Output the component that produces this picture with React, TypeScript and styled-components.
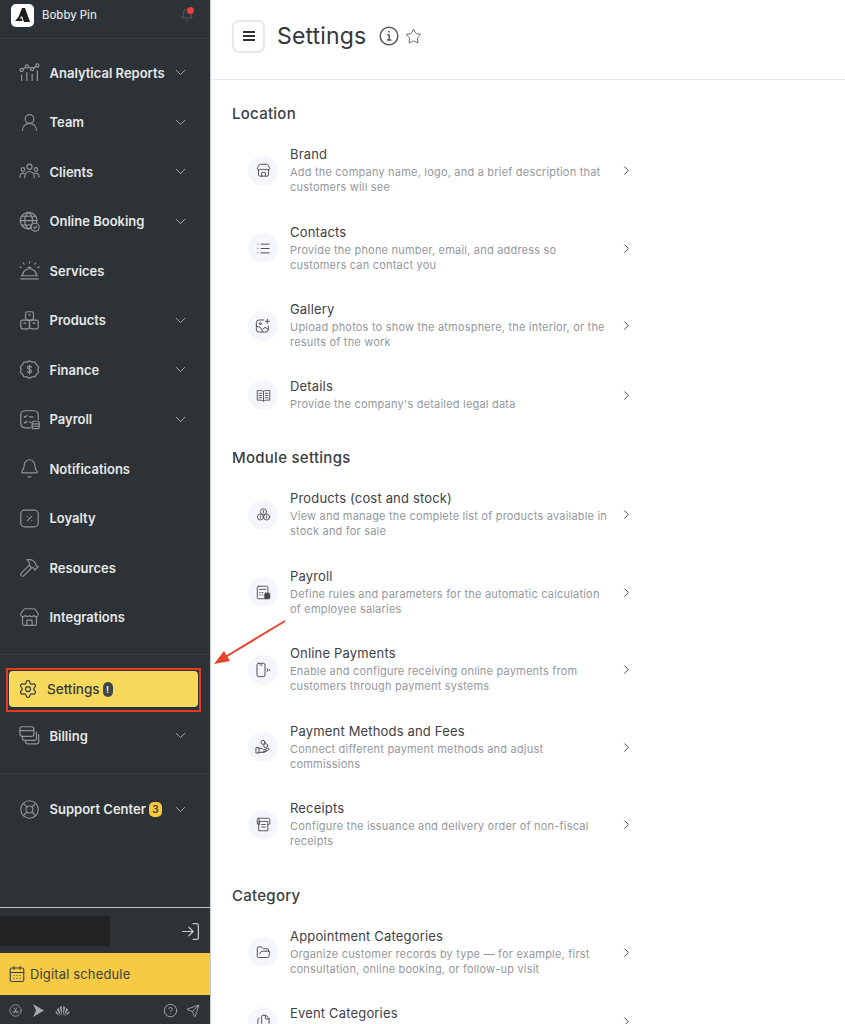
import type { ReactNode } from 'react'
import styled, { createGlobalStyle } from 'styled-components'
import {
  Bell,
  CalendarDays,
  ChevronDown,
  ChevronRight,
  CircleHelp,
  FolderOpen,
  Hammer,
  LifeBuoy,
  List,
  LogIn,
  Send,
  Settings as SettingsIcon,
  Star,
  Store,
  UserRound,
  Files,
} from 'lucide-react'

const GlobalStyle = createGlobalStyle`
  html, body {
    margin: 0;
    padding: 0;
    background: #fff;
    font-family: Inter, "Liberation Sans", sans-serif;
    overflow: hidden;
  }
  * { box-sizing: border-box; }
`

const Page = styled.div`
  position: relative;
  display: flex;
  width: 845px;
  height: 1024px;
  overflow: hidden;
`

const Sidebar = styled.aside`
  flex: 0 0 211px;
  height: 1024px;
  display: flex;
  flex-direction: column;
  background: #2d3236;
  border-right: 1px solid #c9cbcd;
`

const Account = styled.div`
  height: 39px;
  flex: none;
  display: flex;
  align-items: center;
  padding: 0 16px 8px 11px;
  border-bottom: 1px solid #363b3f;
  color: #dfe1e2;
  font-size: 11.4px;
  font-weight: 500;
`

const Logo = styled.div`
  width: 23px;
  height: 23px;
  border-radius: 5px;
  background: #fff;
  display: flex;
  align-items: center;
  justify-content: center;
  margin-right: 8px;
`

const BellWrap = styled.div`
  position: relative;
  margin-left: auto;
  display: flex;
  color: #63686c;

  &::after {
    content: '';
    position: absolute;
    top: -1px;
    right: 0;
    width: 7px;
    height: 7px;
    border-radius: 50%;
    background: #ee3d3d;
  }
`

const Nav = styled.nav`
  padding-top: 9px;
  border-bottom: 1px solid #363b3f;
  padding-bottom: 12px;
`

const NavRow = styled.div`
  height: 49.5px;
  display: flex;
  align-items: center;
  padding-left: 19px;
  padding-right: 21px;
  color: #e6e8e9;
  font-size: 13px;
  font-weight: 600;

  > svg:first-child {
    flex: none;
    margin-right: 9.5px;
    color: #90959a;
  }
`

const NavChevron = styled(ChevronDown)`
  margin-left: auto;
  color: #a4a8ab;
  flex: none;
`

const Highlight = styled.div`
  margin: 13px 9px 0 6px;
  height: 44px;
  padding: 1px;
  border: 2px solid #e53b26;
  background: #2d3236;
`

const HighlightInner = styled.div`
  height: 36px;
  background: #f9d95c;
  border-radius: 4px;
  display: flex;
  align-items: center;
  padding-left: 9px;
  color: #34393d;
  font-size: 13.5px;
  font-weight: 500;

  > svg {
    margin-right: 9px;
  }
`

const SmallBadge = styled.span`
  display: inline-flex;
  align-items: center;
  justify-content: center;
  width: 10px;
  height: 15px;
  margin-left: 3px;
  border-radius: 5px;
  background: #3f454b;
  color: #f0f0f0;
  font-size: 9px;
  font-weight: 700;
`

const CountBadge = styled.span`
  display: inline-flex;
  align-items: center;
  justify-content: center;
  width: 13px;
  height: 15px;
  margin-left: 3px;
  border-radius: 5px;
  background: #f8c93e;
  color: #34393d;
  font-size: 10px;
  font-weight: 600;
`

const Section = styled.div`
  margin-top: -1px;
  border-bottom: 1px solid #363b3f;
  padding-bottom: 12px;
`

const Support = styled.div`
  padding-top: 11px;
`

const Footer = styled.div`
  margin-top: auto;
  flex: none;
`

const UserBar = styled.div`
  height: 46px;
  border-top: 1px solid #c4c6c8;
  display: flex;
  align-items: center;
  justify-content: space-between;
  padding-right: 9px;
  padding-top: 1px;
  color: #c9cbcd;
`

const Redacted = styled.div`
  width: 110px;
  height: 30px;
  background: #212325;
`

const ScheduleBar = styled.div`
  height: 42px;
  display: flex;
  align-items: center;
  gap: 4px;
  padding-left: 8px;
  background: #f6ca42;
  color: #3d4145;
  font-size: 13px;
  letter-spacing: 0.15px;
`

const StoreBar = styled.div`
  height: 29px;
  display: flex;
  align-items: center;
  gap: 11px;
  padding: 2px 10px 0 9px;
  color: #a5a9ac;
`

const StorePush = styled.div`
  margin-left: auto;
  display: flex;
  align-items: center;
  gap: 8px;
`

const Main = styled.main`
  flex: 1;
  min-width: 0;
`

const TopBar = styled.header`
  height: 80px;
  display: flex;
  align-items: center;
  padding: 0 0 7px 21px;
  border-bottom: 1px solid #e9eaec;
`

const MenuButton = styled.button`
  width: 33px;
  height: 33px;
  display: flex;
  align-items: center;
  justify-content: center;
  padding: 0;
  border: 2px solid #e5e7ee;
  border-radius: 7px;
  background: #fff;
  color: #2f3337;
  margin-right: 12px;
`

const MenuBars = styled.span`
  display: block;
  width: 12px;
  height: 10px;
  border-top: 2px solid currentColor;
  border-bottom: 2px solid currentColor;
  position: relative;

  &::after {
    content: '';
    position: absolute;
    left: 0;
    right: 0;
    top: 2px;
    border-top: 2px solid currentColor;
  }
`

const Title = styled.h1`
  margin: 0 13px 0 0;
  color: #33373b;
  font-size: 23px;
  font-weight: 400;
  letter-spacing: 0.15px;
`

const TopIcons = styled.div`
  display: flex;
  align-items: center;
  gap: 6px;
  color: #54585c;
`

const Content = styled.div`
  padding: 25px 0 0 21px;
`

const Heading = styled.h2<{ $gap?: number }>`
  margin: ${(props) => props.$gap ?? 0}px 0 0;
  color: #3a3e42;
  font-size: 15px;
  font-weight: 500;
  line-height: 18px;
  letter-spacing: 0.27px;
`

const RowList = styled.div`
  margin-top: 9px;
  padding-left: 16px;
`

const Row = styled.div<{ $height?: number }>`
  display: flex;
  align-items: center;
  height: ${(props) => props.$height ?? 77.5}px;
  width: 389px;
`

const IconDisc = styled.div`
  flex: none;
  width: 30px;
  height: 30px;
  margin-right: 12px;
  border-radius: 50%;
  background: #f5f6fb;
  display: flex;
  align-items: center;
  justify-content: center;
  color: #43474b;
`

const RowText = styled.div`
  width: 319px;
  margin-top: 0;
`

const RowTitle = styled.div`
  color: #3e4246;
  font-size: 13px;
  line-height: 17px;
  letter-spacing: 0.17px;
  margin-bottom: 2px;
`

const RowDesc = styled.div`
  min-height: 15px;
  color: #94989e;
  font-size: 11px;
  line-height: 15px;
  letter-spacing: 0.2px;
`

const RowChevron = styled(ChevronRight)`
  flex: none;
  margin-left: 10px;
  color: #4a4e52;
`

const Arrow = styled.svg`
  position: absolute;
  left: 210px;
  top: 615px;
`

const iconProps = { size: 21, strokeWidth: 1.3 }
const smallIcon = { size: 15, strokeWidth: 1.5 }

const Glyph = ({ children, size = 21 }: { children: ReactNode; size?: number }) => (
  <svg
    width={size}
    height={size}
    viewBox="0 0 24 24"
    fill="none"
    stroke="currentColor"
    strokeWidth={1.4}
    strokeLinecap="round"
    strokeLinejoin="round"
  >
    {children}
  </svg>
)

const AnalyticsIcon = () => (
  <Glyph>
    <circle cx="3" cy="9" r="1.8" />
    <circle cx="9" cy="5" r="1.8" />
    <circle cx="15" cy="8" r="1.8" />
    <circle cx="21" cy="4" r="1.8" />
    <path d="M4.5 8 7.5 6M10.6 5.8l2.8 1.4M16.5 7l3-2M3 15v6M9 12v9M15 14v7M21 10v11" />
  </Glyph>
)

const ClientsIcon = () => (
  <svg
    width="21"
    height="19"
    viewBox="0 0 26 24"
    fill="none"
    stroke="currentColor"
    strokeWidth="1.5"
    strokeLinecap="round"
  >
    <circle cx="13" cy="6" r="3.2" />
    <circle cx="4.8" cy="9.5" r="2.3" />
    <circle cx="21.2" cy="9.5" r="2.3" />
    <path d="M7 20v-2a6 6 0 0 1 12 0v2M1 19v-1a4 4 0 0 1 5-3.7M25 19v-1a4 4 0 0 0-5-3.7" />
  </svg>
)

const GlobeBadgeIcon = () => (
  <Glyph>
    <circle cx="11" cy="11" r="9.5" />
    <path d="M1.5 11h19M11 1.500c-6 5-6 14 0 19M11 1.500c6 5 6 14 0 19M3 6h16M3 16h16" />
    <circle cx="18.500" cy="18.500" r="4.500" fill="#2d3236" />
    <path d="M16.800 18.500l1.200 1.200 2-2.200" />
  </Glyph>
)

const ServicesIcon = () => (
  <Glyph>
    <path d="M4 18a8 8 0 0 1 16 0M2 21.500h20M2.500 18h19M12 10V8.500M10.500 8.500h3" />
    <path d="M12 2v1.500M5 3.500l.8 1.300M19 3.500l-.8 1.300M1 8l1.400.5M23 8l-1.400.5" />
  </Glyph>
)

const BlocksIcon = () => (
  <Glyph>
    <rect x="7.500" y="2" width="9" height="9.500" rx="2" />
    <rect x="2" y="11.500" width="10" height="10" rx="2" />
    <rect x="12" y="11.500" width="10" height="10" rx="2" />
    <path d="M11 5.500h2M5.500 15h2.500M16 15h2.500" />
  </Glyph>
)

const FinanceIcon = () => (
  <Glyph>
    <path d="M12 2l3 1.600 3.400-.1 1.600 3 2.500 2.500-1 3 1 3-2.500 2.300-1.600 3-3.400.1L12 22l-3-1.600-3.400-.1-1.600-3L1.500 15l1-3-1-3L4 6.500l1.600-3 3.400.1z" />
    <path d="M14.300 9.500c-.4-.9-1.200-1.300-2.300-1.300-1.300 0-2.300.6-2.300 1.800 0 2.500 4.600 1.400 4.600 3.900 0 1.200-1 1.800-2.300 1.800-1.100 0-2-.4-2.400-1.300M12 7v10" />
  </Glyph>
)

const PayrollIcon = () => (
  <Glyph>
    <path d="M13 21.500H7a5 5 0 0 1-5-5V7a5 5 0 0 1 5-5h10a5 5 0 0 1 5 5v5" />
    <path d="M6 8.500l1 1 2-2M6 15l1 1 2-2M12 9h4M12 15h1" />
    <rect x="15" y="14" width="8" height="8.500" rx="1.500" />
    <path d="M15 17h8M15 19.700h8" />
  </Glyph>
)

const LoyaltyIcon = () => (
  <Glyph>
    <rect x="2" y="2.500" width="20" height="19" rx="4.500" />
    <path d="M9.500 14.500l5-5M9.500 9.800h.1M14.500 14.300h.1" />
  </Glyph>
)

const BillingIcon = () => (
  <Glyph>
    <rect x="1" y="2" width="16" height="11" rx="2.500" />
    <path d="M1 6.500h16" />
    <path d="M4 13v2.500a2 2 0 0 0 2 2h12a2 2 0 0 0 2-2V8" />
    <path d="M7.500 17.500v2a2 2 0 0 0 2 2h11a2 2 0 0 0 2-2V11" />
  </Glyph>
)

const GalleryIcon = () => (
  <Glyph size={16}>
    <path d="M13 3H6a4 4 0 0 0-4 4v10a4 4 0 0 0 4 4h10a4 4 0 0 0 4-4v-5" />
    <path d="M2.500 12.500 8 14l4 7M12 16.500l3-2.500 5 3" />
    <circle cx="8" cy="8.500" r="1.500" />
    <path d="M18.500 2v6M15.500 5h6" />
  </Glyph>
)

const BookIcon = () => (
  <Glyph size={15}>
    <path d="M12 5.500C10 4 6 3.500 2 4v15.500c4-.5 8 0 10 1.500 2-1.500 6-2 10-1.500V4c-4-.5-8 0-10 1.500zM12 5.500V21" />
    <path d="M5 8.500h4M5 12h4M5 15.500h4M15 8.500h4M15 12h4M15 15.500h4" />
  </Glyph>
)

const CubesIcon = () => (
  <Glyph size={15}>
    <circle cx="12" cy="7.500" r="4.800" />
    <circle cx="7" cy="16" r="4.800" />
    <circle cx="17" cy="16" r="4.800" />
    <path d="M12 5.500v4M7 14v4M17 14v4" />
  </Glyph>
)

const CalcIcon = () => (
  <Glyph size={15}>
    <rect x="2" y="2" width="17" height="20" rx="2.500" />
    <path d="M5.500 7h10M6 12h1M10 12h1M6 16h1M10 16h1" />
    <rect x="14" y="13" width="8" height="9" rx="1.500" fill="#43474b" />
  </Glyph>
)

const PhoneWaveIcon = () => (
  <Glyph size={16}>
    <rect x="3" y="2" width="12" height="20" rx="2.500" />
    <path d="M7.500 4.500h3M18.500 10v4M21.500 11v2" />
  </Glyph>
)

const HandCoinsIcon = () => (
  <Glyph size={16}>
    <circle cx="12" cy="5" r="3" />
    <circle cx="16" cy="10" r="3" />
    <path d="M2 13h4v8H2zM6 14h4l3 2h2a1.500 1.500 0 0 1 0 3h-3M6 20h8l7-4a1.500 1.500 0 0 0-2-2l-4 2" />
  </Glyph>
)

const ReceiptPrinterIcon = () => (
  <Glyph size={15}>
    <path d="M4 2h16a2 2 0 0 1 2 2v6a2 2 0 0 1-2 2h-1M5 12H4a2 2 0 0 1-2-2V4a2 2 0 0 1 2-2z" />
    <path d="M5 7h14v15H5zM9 12h6M9 16h6" />
  </Glyph>
)

const InfoIcon = () => (
  <svg width="20" height="20" viewBox="0 0 20 20" fill="none" stroke="currentColor" strokeWidth="1.5">
    <circle cx="10" cy="10" r="8.800" />
    <path d="M8.300 9h1.900v5M8 14h4.400" strokeWidth="1.400" />
    <path d="M9.200 5.700h1.500" strokeWidth="1.800" />
  </svg>
)

const AppStoreIcon = () => (
  <Glyph size={13}>
    <circle cx="12" cy="12" r="10.500" />
    <path d="M9 17l5.500-10M15 17L9.500 7M6 14.500h12" />
  </Glyph>
)

const PlayIcon = () => (
  <svg width="11" height="13" viewBox="0 0 11 13">
    <path d="M0 0l11 6.500L0 13l3-6.500z" fill="currentColor" />
  </svg>
)

const HuaweiIcon = () => (
  <svg width="15" height="12" viewBox="0 0 15 12" fill="currentColor">
    <path d="M7 11 4.800 2.500c.6-1 1.500-1.500 1.900-1.500zM8 11l2.200-8.500C9.600 1.500 8.700 1 8.300 1zM6 11 2 5c.3-1 1-1.800 1.700-2.200zM9 11l4-6c-.3-1-1-1.800-1.700-2.200zM5 11 .5 8c0-.7.2-1.400.6-1.900zM10 11l4.500-3c0-.7-.2-1.400-.6-1.900z" />
  </svg>
)

const LogoMark = () => (
  <svg width="15" height="14" viewBox="0 0 15 14">
    <path d="M7 0h3l5 14H9L7 8l-2.500 2.500H7L7.500 13H0l3.500-4z" fill="#1c1e20" />
  </svg>
)

type NavEntry = { label: string; icon: ReactNode; open?: boolean }

const navEntries: NavEntry[] = [
  { label: 'Analytical Reports', icon: <AnalyticsIcon />, open: true },
  { label: 'Team', icon: <UserRound {...iconProps} />, open: true },
  { label: 'Clients', icon: <ClientsIcon />, open: true },
  { label: 'Online Booking', icon: <GlobeBadgeIcon />, open: true },
  { label: 'Services', icon: <ServicesIcon /> },
  { label: 'Products', icon: <BlocksIcon />, open: true },
  { label: 'Finance', icon: <FinanceIcon />, open: true },
  { label: 'Payroll', icon: <PayrollIcon />, open: true },
  { label: 'Notifications', icon: <Bell {...iconProps} /> },
  { label: 'Loyalty', icon: <LoyaltyIcon /> },
  { label: 'Resources', icon: <Hammer {...iconProps} /> },
  { label: 'Integrations', icon: <Store {...iconProps} /> },
]

type SettingRow = { title: string; desc?: string; icon: ReactNode; height?: number }

const location: SettingRow[] = [
  {
    title: 'Brand',
    desc: 'Add the company name, logo, and a brief description that customers will see',
    icon: <Store {...smallIcon} />,
  },
  {
    title: 'Contacts',
    desc: 'Provide the phone number, email, and address so customers can contact you',
    icon: <List {...smallIcon} />,
  },
  {
    title: 'Gallery',
    desc: 'Upload photos to show the atmosphere, the interior, or the results of the work',
    icon: <GalleryIcon />,
  },
  {
    title: 'Details',
    desc: "Provide the company's detailed legal data",
    icon: <BookIcon />,
    height: 61.5,
  },
]

const modules: SettingRow[] = [
  {
    title: 'Products (cost and stock)',
    desc: 'View and manage the complete list of products available in stock and for sale',
    icon: <CubesIcon />,
  },
  {
    title: 'Payroll',
    desc: 'Define rules and parameters for the automatic calculation of employee salaries',
    icon: <CalcIcon />,
  },
  {
    title: 'Online Payments',
    desc: 'Enable and configure receiving online payments from customers through payment systems',
    icon: <PhoneWaveIcon />,
  },
  {
    title: 'Payment Methods and Fees',
    desc: 'Connect different payment methods and adjust commissions',
    icon: <HandCoinsIcon />,
  },
  {
    title: 'Receipts',
    desc: 'Configure the issuance and delivery order of non-fiscal receipts',
    icon: <ReceiptPrinterIcon />,
  },
]

// the last row's description falls below the fold, so only its title is shown
const categories: SettingRow[] = [
  {
    title: 'Appointment Categories',
    desc: 'Organize customer records by type — for example, first consultation, online booking, or follow-up visit',
    icon: <FolderOpen {...smallIcon} />,
  },
  {
    title: 'Event Categories',
    icon: <Files {...smallIcon} />,
    height: 61.5,
  },
]

const Rows = ({ rows }: { rows: SettingRow[] }) => (
  <RowList>
    {rows.map((row) => (
      <Row key={row.title} $height={row.height}>
        <IconDisc>{row.icon}</IconDisc>
        <RowText>
          <RowTitle>{row.title}</RowTitle>
          <RowDesc>{row.desc}</RowDesc>
        </RowText>
        <RowChevron size={15} strokeWidth={1.6} />
      </Row>
    ))}
  </RowList>
)

export default function App() {
  return (
    <Page>
      <GlobalStyle />
      <Sidebar>
        <Account>
          <Logo>
            <LogoMark />
          </Logo>
          Bobby Pin
          <BellWrap>
            <Bell size={14} strokeWidth={1.4} />
          </BellWrap>
        </Account>
        <Nav>
          {navEntries.map((entry) => (
            <NavRow key={entry.label}>
              {entry.icon}
              {entry.label}
              {entry.open && <NavChevron size={17} strokeWidth={1.4} />}
            </NavRow>
          ))}
        </Nav>
        <Highlight>
          <HighlightInner>
            <SettingsIcon size={20} strokeWidth={1.5} />
            Settings
            <SmallBadge>!</SmallBadge>
          </HighlightInner>
        </Highlight>
        <Section>
          <NavRow>
            <BillingIcon />
            Billing
            <NavChevron size={17} strokeWidth={1.4} />
          </NavRow>
        </Section>
        <Support>
          <NavRow>
            <LifeBuoy {...iconProps} />
            Support Center
            <CountBadge>3</CountBadge>
            <NavChevron size={17} strokeWidth={1.4} />
          </NavRow>
        </Support>
        <Footer>
          <UserBar>
            <Redacted />
            <LogIn size={21} strokeWidth={1.4} />
          </UserBar>
          <ScheduleBar>
            <CalendarDays size={18} strokeWidth={1.5} />
            Digital schedule
          </ScheduleBar>
          <StoreBar>
            <AppStoreIcon />
            <PlayIcon />
            <HuaweiIcon />
            <StorePush>
              <CircleHelp size={15} strokeWidth={1.5} />
              <Send size={14} strokeWidth={1.5} />
            </StorePush>
          </StoreBar>
        </Footer>
      </Sidebar>
      <Main>
        <TopBar>
          <MenuButton>
            <MenuBars />
          </MenuButton>
          <Title>Settings</Title>
          <TopIcons>
            <InfoIcon />
            <Star size={17} strokeWidth={1.3} />
          </TopIcons>
        </TopBar>
        <Content>
          <Heading>Location</Heading>
          <Rows rows={location} />
          <Heading $gap={23}>Module settings</Heading>
          <Rows rows={modules} />
          <Heading $gap={23}>Category</Heading>
          <Rows rows={categories} />
        </Content>
      </Main>
      <Arrow width="80" height="56" viewBox="0 0 80 56">
        <path d="M75 6 12 44" stroke="#e8432e" strokeWidth="2" fill="none" />
        <path d="M4 49 14 36 20 46z" fill="#e8432e" />
      </Arrow>
    </Page>
  )
}
